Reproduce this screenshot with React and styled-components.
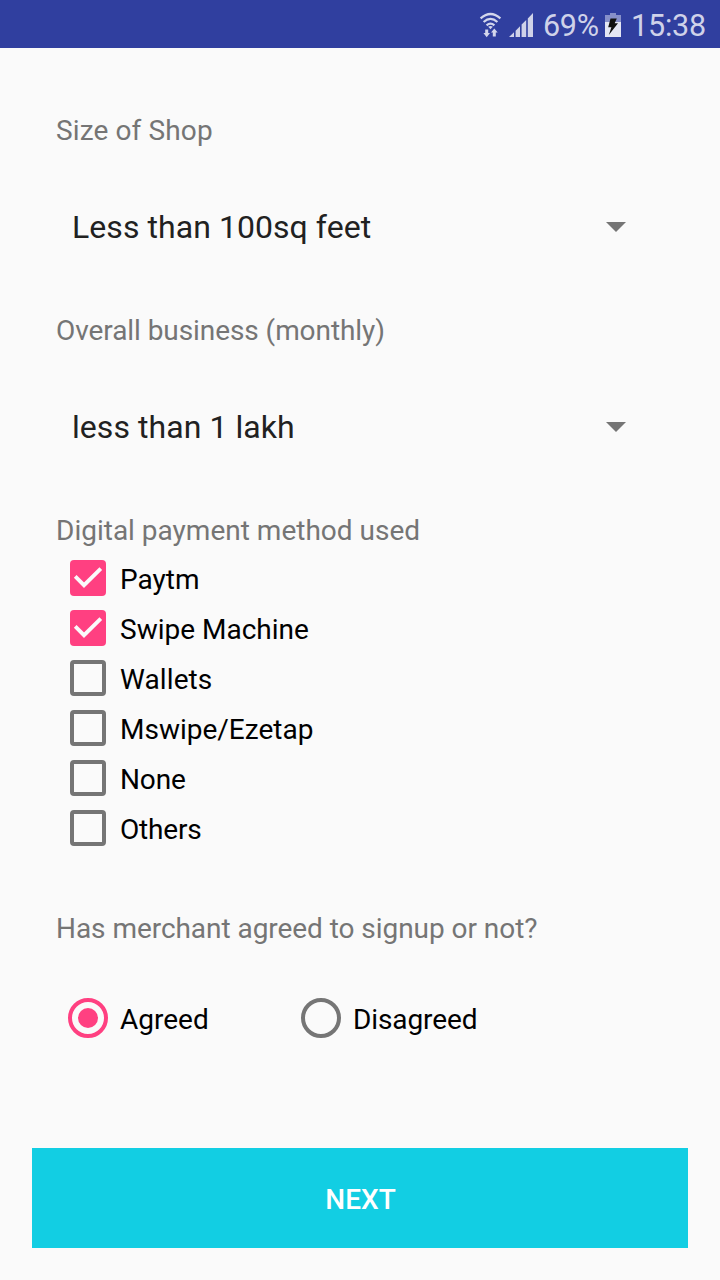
import React, { useState } from "react";
import styled, { createGlobalStyle } from "styled-components";

const GlobalStyle = createGlobalStyle`
  * { box-sizing: border-box; }
  body {
    margin: 0;
    background: #fafafa;
    font-family: Roboto, sans-serif;
  }
`;

const Screen = styled.div`
  width: 720px;
  height: 1280px;
  display: flex;
  flex-direction: column;
  background: #fafafa;
  overflow: hidden;
`;

const StatusBar = styled.header`
  flex: none;
  height: 48px;
  padding: 3px 14px 0 0;
  display: flex;
  justify-content: flex-end;
  align-items: center;
  background: #303f9f;
  color: #cfd2e9;
  font-size: 30.5px;
  line-height: 45px;
  white-space: nowrap;
`;

const StatusIcons = styled.svg`
  flex: none;
  width: 60px;
  height: 45px;
  display: block;
`;

const BatteryIcon = styled.svg`
  flex: none;
  width: 16px;
  height: 45px;
  margin: 0 10px 0 6px;
  display: block;
`;

const StatusText = styled.span`
  width: ${(p) => p.$width}px;
  padding-left: ${(p) => p.$indent}px;
  letter-spacing: ${(p) => p.$spacing || 0}px;
`;

const Form = styled.main`
  flex: 1;
  padding: 65px 56px 0;
  display: flex;
  flex-direction: column;
`;

const Field = styled.section`
  height: 200px;
`;

const Label = styled.div`
  height: 36px;
  font-size: 28px;
  line-height: 36px;
  letter-spacing: ${(p) => p.$spacing || 0}px;
  color: #757575;
  white-space: nowrap;
`;

const Select = styled.div`
  height: 96px;
  margin-top: 30px;
  padding: 0 38px 0 16px;
  display: flex;
  align-items: center;
  justify-content: space-between;
  font-size: 32px;
  line-height: 96px;
  letter-spacing: 0.06px;
  color: #212121;
`;

const Arrow = styled.svg`
  width: 20px;
  height: 10px;
  display: block;
`;

const CheckList = styled.div`
  margin-top: 4px;
  display: flex;
  flex-direction: column;
`;

const Option = styled.label`
  width: ${(p) => (p.$width ? `${p.$width}px` : "auto")};
  height: 50px;
  padding-left: 12px;
  display: flex;
  align-items: center;
  gap: 12px;
  font-size: 28px;
  line-height: 46px;
  color: #000;
`;

const Mark = styled.svg`
  flex: none;
  width: 40px;
  height: 40px;
  display: block;
`;

const OptionText = styled.span`
  padding-top: 3px;
  letter-spacing: ${(p) => p.$spacing || 0}px;
`;

const Agreement = styled.section`
  margin-top: 58px;
`;

const Radios = styled.div`
  margin-top: 46px;
  display: flex;
`;

const Footer = styled.footer`
  flex: none;
  padding: 0 32px 32px;
`;

const NextButton = styled.button`
  width: 100%;
  height: 100px;
  display: block;
  border: 0;
  padding: 3px 0 0 1px;
  background: #12cee3;
  color: #fff;
  font: 500 28px/97px Roboto, sans-serif;
`;

function Checkbox({ checked }) {
  return (
    <Mark viewBox="0 0 40 40">
      {checked ? (
        <>
          <rect x="2" y="2" width="36" height="36" rx="4" fill="#ff4081" />
          <path d="M7.2 18.4 L16 27.2 L32.8 10.6" fill="none" stroke="#fafafa" strokeWidth="3.8" />
        </>
      ) : (
        <rect x="4" y="4" width="32" height="32" rx="2" fill="none" stroke="#757575" strokeWidth="4" />
      )}
    </Mark>
  );
}

function Radio({ checked }) {
  const color = checked ? "#ff4081" : "#757575";
  return (
    <Mark viewBox="0 0 40 40">
      <circle cx="20" cy="20" r="18" fill="none" stroke={color} strokeWidth="4" />
      {checked && <circle cx="20" cy="20" r="10" fill={color} />}
    </Mark>
  );
}

function Dropdown({ label, value, spacing }) {
  return (
    <Field>
      <Label $spacing={spacing}>{label}</Label>
      <Select>
        <span>{value}</span>
        <Arrow viewBox="0 0 20 10">
          <path d="M0 0H20L10 10Z" fill="#757575" />
        </Arrow>
      </Select>
    </Field>
  );
}

const METHODS = [
  { name: "Paytm" },
  { name: "Swipe Machine" },
  { name: "Wallets", spacing: 0.1 },
  { name: "Mswipe/Ezetap" },
  { name: "None", spacing: -0.15 },
  { name: "Others", spacing: -0.2 },
];

export default function App() {
  const [used, setUsed] = useState(["Paytm", "Swipe Machine"]);
  const [agreed, setAgreed] = useState(true);
  const toggle = (m) =>
    setUsed((list) => (list.includes(m) ? list.filter((x) => x !== m) : [...list, m]));

  return (
    <Screen>
      <GlobalStyle />
      <StatusBar>
        <StatusIcons viewBox="477 3 60 45">
          <g fill="none" stroke="#d3d6ec" strokeWidth="2.2">
            <path d="M480.6 18.4Q490.5 9.6 500.4 18.4" />
            <path d="M483.6 22Q490.5 15.8 497.4 22" />
            <path d="M486.6 25.4Q490.5 21.8 494.4 25.4" />
          </g>
          <path d="M488.2 26.8Q490.5 25 492.8 26.8L490.5 29.2Z" fill="#d3d6ec" />
          <path
            d="M485.2 29.6H488.2V33H490L486.7 37.2L483.4 33H485.2Z M492.8 36.4H495.8V32.6H497.7L494.3 28.4L491 32.6H492.8Z"
            fill="#d3d6ec"
          />
          <path
            d="M509 37L514 32.2V37Z M515.6 37V30.7L520 26.3V37Z M521.6 37V24.6L526.2 20V37Z M527.8 37V18.4L533 13V37Z"
            fill="#cfd2e9"
          />
        </StatusIcons>
        <StatusText $width={62} $indent={6} $spacing={-0.3}>69%</StatusText>
        <BatteryIcon viewBox="605 3 16 45">
          <path d="M610 13H616V15H621V22H605V15H610Z" fill="#8790c9" />
          <path d="M605 22H621V37H605Z" fill="#e4e6f4" />
          <path d="M610.5 18.5H616.8L614.7 23.3H618L608.8 35L611.4 27.3H608.2Z" fill="#111" />
        </BatteryIcon>
        <StatusText $width={75} $indent={0} $spacing={-0.2}>15:38</StatusText>
      </StatusBar>

      <Form>
        <Dropdown label="Size of Shop" value="Less than 100sq feet" spacing={0.12} />
        <Dropdown label="Overall business (monthly)" value="less than 1 lakh" spacing={-0.07} />

        <section>
          <Label>Digital payment method used</Label>
          <CheckList>
            {METHODS.map(({ name, spacing }) => (
              <Option key={name} onClick={() => toggle(name)}>
                <Checkbox checked={used.includes(name)} />
                <OptionText $spacing={spacing}>{name}</OptionText>
              </Option>
            ))}
          </CheckList>
        </section>

        <Agreement>
          <Label $spacing={-0.05}>Has merchant agreed to signup or not?</Label>
          <Radios>
            <Option $width={233} onClick={() => setAgreed(true)}>
              <Radio checked={agreed} />
              <OptionText>Agreed</OptionText>
            </Option>
            <Option $width={233} onClick={() => setAgreed(false)}>
              <Radio checked={!agreed} />
              <OptionText $spacing={-0.1}>Disagreed</OptionText>
            </Option>
          </Radios>
        </Agreement>
      </Form>

      <Footer>
        <NextButton>NEXT</NextButton>
      </Footer>
    </Screen>
  );
}
